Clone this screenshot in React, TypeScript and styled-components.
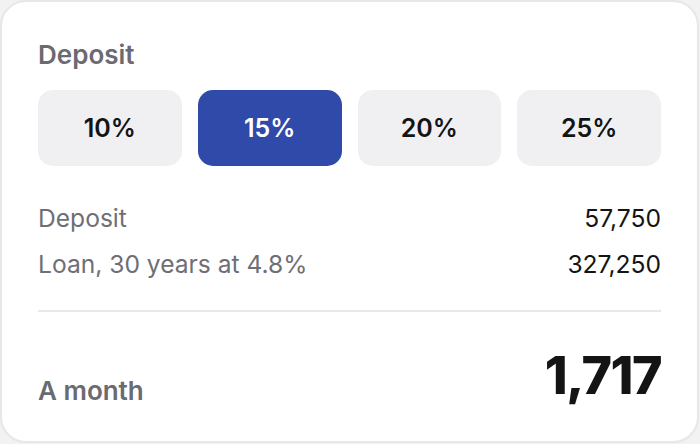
import React, { useState } from "react";
import styled, { createGlobalStyle } from "styled-components";

const GlobalStyle = createGlobalStyle`
  html, body {
    margin: 0;
    padding: 0;
    background: #f2f2f3;
    font-family: Inter, "Liberation Sans", sans-serif;
  }
`;

const Card = styled.div`
  box-sizing: border-box;
  width: 699px;
  height: 443px;
  background: #ffffff;
  border: 2px solid #e7e7e9;
  border-radius: 26px;
  padding: 38px 36px 0 36px;
  display: flex;
  flex-direction: column;
`;

const SectionTitle = styled.div`
  font-size: 26px;
  font-weight: 600;
  color: #6a6a72;
  line-height: 30px;
`;

const Options = styled.div`
  display: grid;
  grid-template-columns: repeat(4, 1fr);
  gap: 16px;
  margin-top: 20px;
`;

const Option = styled.button<{ $active?: boolean }>`
  height: 76px;
  border: none;
  border-radius: 15px;
  background: ${({ $active }) => ($active ? "#2f4aa8" : "#f0f0f3")};
  color: ${({ $active }) => ($active ? "#ffffff" : "#141414")};
  font-family: inherit;
  font-size: 25px;
  font-weight: 600;
  cursor: pointer;
`;

const Rows = styled.div`
  display: flex;
  flex-direction: column;
  gap: 18px;
  margin-top: 38px;
`;

const Row = styled.div`
  display: flex;
  justify-content: space-between;
  align-items: center;
  font-size: 24.6px;
  line-height: 28px;
`;

const Label = styled.span`
  color: #6e6e76;
`;

const Value = styled.span`
  color: #141414;
`;

const Divider = styled.div`
  height: 2px;
  background: #e8e8ea;
  margin-top: 32px;
`;

const Total = styled.div`
  display: flex;
  justify-content: space-between;
  align-items: flex-end;
  margin-top: 36px;
`;

const TotalLabel = styled.span`
  font-size: 26px;
  font-weight: 600;
  color: #6a6a72;
  line-height: 30px;
  margin-bottom: -2px;
`;

const TotalValue = styled.span`
  font-size: 52px;
  font-weight: 800;
  color: #141414;
  letter-spacing: -1.5px;
  line-height: 56px;
`;

const options = [10, 15, 20, 25];

export default function App() {
  const [selected, setSelected] = useState(15);
  return (
    <>
      <GlobalStyle />
      <Card>
        <SectionTitle>Deposit</SectionTitle>
        <Options>
          {options.map((o) => (
            <Option key={o} $active={o === selected} onClick={() => setSelected(o)}>
              {o}%
            </Option>
          ))}
        </Options>
        <Rows>
          <Row>
            <Label>Deposit</Label>
            <Value>57,750</Value>
          </Row>
          <Row>
            <Label>Loan, 30 years at 4.8%</Label>
            <Value>327,250</Value>
          </Row>
        </Rows>
        <Divider />
        <Total>
          <TotalLabel>A month</TotalLabel>
          <TotalValue>1,717</TotalValue>
        </Total>
      </Card>
    </>
  );
}
